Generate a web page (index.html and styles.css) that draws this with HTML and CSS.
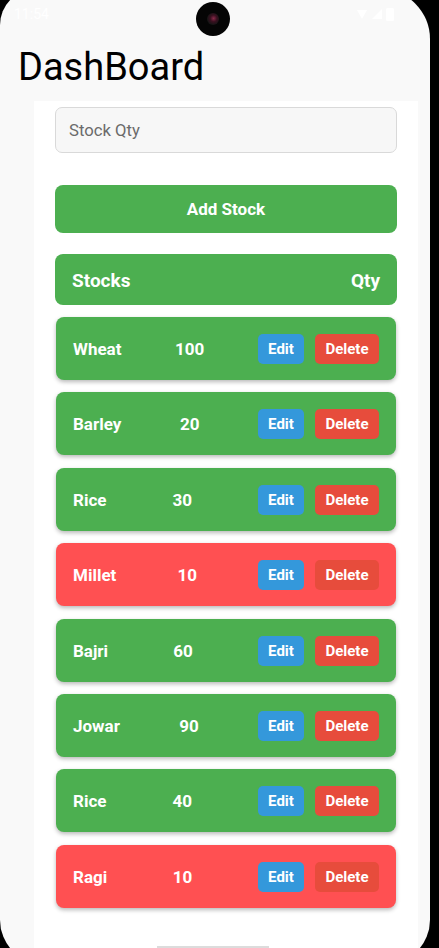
FILE: index.html
```html
<!DOCTYPE html>
<html>
<head>
<meta charset="utf-8">
<link rel="stylesheet" href="styles.css">
</head>
<body>
<div class="screen">
  <div class="status">
    <span class="time">11:54</span>
    <span class="status-icons">
      <svg width="12" height="12" viewBox="0 0 12 12"><path d="M1 2 L6 11 L11 2 Z" fill="#fff"/></svg>
      <svg width="10" height="12" viewBox="0 0 10 12"><path d="M10 1 V11 H0 Z" fill="#fff"/></svg>
      <svg width="8" height="14" viewBox="0 0 8 14"><rect x="0" y="1" width="8" height="13" rx="1.5" fill="#fff"/></svg>
    </span>
  </div>
  <div class="camera"><div class="lens"></div></div>
  <h1 class="title">DashBoard</h1>
  <div class="card">
    <div class="input">Stock Qty</div>
    <div class="add-btn">Add Stock</div>
    <div class="head">
      <span>Stocks</span>
      <span>Qty</span>
    </div>
    <div class="list">
      <div class="row ok"><span class="name">Wheat</span><span class="qty">100</span><span class="actions"><span class="btn edit">Edit</span><span class="btn del">Delete</span></span></div>
      <div class="row ok"><span class="name">Barley</span><span class="qty">20</span><span class="actions"><span class="btn edit">Edit</span><span class="btn del">Delete</span></span></div>
      <div class="row ok"><span class="name">Rice</span><span class="qty">30</span><span class="actions"><span class="btn edit">Edit</span><span class="btn del">Delete</span></span></div>
      <div class="row low"><span class="name">Millet</span><span class="qty">10</span><span class="actions"><span class="btn edit">Edit</span><span class="btn del">Delete</span></span></div>
      <div class="row ok"><span class="name">Bajri</span><span class="qty">60</span><span class="actions"><span class="btn edit">Edit</span><span class="btn del">Delete</span></span></div>
      <div class="row ok"><span class="name">Jowar</span><span class="qty">90</span><span class="actions"><span class="btn edit">Edit</span><span class="btn del">Delete</span></span></div>
      <div class="row ok"><span class="name">Rice</span><span class="qty">40</span><span class="actions"><span class="btn edit">Edit</span><span class="btn del">Delete</span></span></div>
      <div class="row low"><span class="name">Ragi</span><span class="qty">10</span><span class="actions"><span class="btn edit">Edit</span><span class="btn del">Delete</span></span></div>
    </div>
  </div>
  <div class="home-bar"></div>
</div>
</body>
</html>
```
FILE: styles.css
```css
html, body {
  margin: 0;
  padding: 0;
  background: #000;
  overflow: hidden;
  height: 948px;
}
body {
  font-family: Roboto, "Noto Sans", sans-serif;
}
.screen {
  position: relative;
  margin-top: -11px;
  width: 430px;
  height: 975px;
  background: #f9f9f9;
  border-radius: 36px 50px 44px 44px;
  display: flex;
  flex-direction: column;
  overflow: hidden;
  box-sizing: border-box;
}
.status {
  position: absolute;
  top: 17px;
  left: 14px;
  right: 36px;
  display: flex;
  justify-content: space-between;
  color: #fff;
  font-size: 14px;
}
.status-icons {
  display: flex;
  gap: 4px;
  align-items: center;
}
.camera {
  position: absolute;
  top: 13px;
  left: 196px;
  width: 34px;
  height: 34px;
  border-radius: 50%;
  background: #050505;
  display: flex;
  align-items: center;
  justify-content: center;
}
.lens {
  width: 12px;
  height: 12px;
  border-radius: 50%;
  background: radial-gradient(circle at 55% 45%, #8a2a4a 0, #3a1020 35%, #151515 70%);
}
.title {
  margin: 56px 0 12px 18px;
  font-size: 38px;
  line-height: 44px;
  font-weight: 400;
  color: #000;
}
.card {
  flex: 1;
  margin: 0 12px 0 34px;
  background: #fff;
  padding: 6px 21px 0;
  display: flex;
  flex-direction: column;
}
.input {
  height: 46px;
  box-sizing: border-box;
  border: 1px solid #d9d9d9;
  border-radius: 7px;
  background: #f7f7f7;
  padding-left: 13px;
  display: flex;
  align-items: center;
  font-size: 16.7px;
  color: #6b6b6b;
}
.add-btn {
  margin-top: 32px;
  height: 48px;
  border-radius: 8px;
  background: #4caf50;
  color: #fff;
  font-weight: 700;
  font-size: 17px;
  display: flex;
  align-items: center;
  justify-content: center;
}
.head {
  margin-top: 21px;
  height: 51px;
  box-sizing: border-box;
  border-radius: 8px;
  background: #4caf50;
  color: #fff;
  font-weight: 700;
  font-size: 19px;
  display: flex;
  align-items: center;
  justify-content: space-between;
  padding: 1px 17px 0;
}
.list {
  margin-top: 12px;
  display: flex;
  flex-direction: column;
  gap: 12.4px;
}
.row {
  margin: 0 1px;
  height: 63px;
  border-radius: 8px;
  box-sizing: border-box;
  padding: 1px 17px 0;
  display: flex;
  align-items: center;
  justify-content: space-between;
  color: #fff;
  font-weight: 700;
  font-size: 17px;
  box-shadow: 0 2px 4px rgba(0, 0, 0, 0.28);
}
.row.ok { background: #4caf50; }
.row.low { background: #ff5052; }
.actions {
  display: flex;
  gap: 11px;
}
.btn {
  height: 30px;
  border-radius: 5px;
  display: flex;
  align-items: center;
  justify-content: center;
  font-size: 15px;
  font-weight: 700;
}
.btn.edit {
  width: 46px;
  background: #3498db;
}
.btn.del {
  width: 64px;
  background: #e74c3c;
}
.home-bar {
  position: absolute;
  left: 157px;
  top: 957px;
  width: 112px;
  height: 3px;
  background: #dcdcdc;
}
```
